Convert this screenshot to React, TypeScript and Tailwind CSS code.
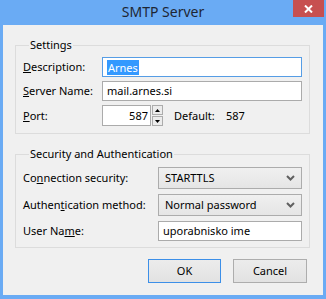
import { ReactNode } from "react"

const Chevron = () => (
  <svg width="9" height="6" viewBox="0 0 9 6" className="shrink-0">
    <polyline points="1,1 4.5,4.5 8,1" fill="none" stroke="#606060" strokeWidth="2" />
  </svg>
)

const Row = ({ label, children, labelW, h }: { label: ReactNode; children: ReactNode; labelW: string; h: string }) => (
  <div className={`flex items-center ${h}`}>
    <div className={`${labelW} shrink-0`}>{label}</div>
    {children}
  </div>
)

const Select = ({ value }: { value: string }) => (
  <div className="w-[144px] h-[22px] border border-[#acacac] bg-gradient-to-b from-[#f0f0f0] to-[#e5e5e5] flex items-center justify-between pl-[6px] pr-[6px]">
    <span>{value}</span>
    <Chevron />
  </div>
)

export default function App() {
  return (
    <div className="w-[326px] h-[299px] bg-[#6aabf4] flex flex-col px-[3px] pb-[4px] text-black font-['Noto_Sans',sans-serif] text-[11px] leading-[14px]">
      {/* title bar */}
      <div className="relative h-[25px] shrink-0 flex items-center justify-center">
        <span className="text-[14px] leading-[18px] text-[#1e2633] -mt-[2px]">SMTP Server</span>
        <div className="absolute top-0 right-[-1px] w-[31px] h-[17px] bg-[#c75050] flex items-center justify-center">
          <svg width="9" height="8" viewBox="0 0 9 8">
            <path d="M1 0.5 L8 7.5 M8 0.5 L1 7.5" stroke="white" strokeWidth="2" />
          </svg>
        </div>
      </div>

      {/* client area */}
      <div className="flex-1 bg-[#f0f0f0] flex flex-col pt-[12px]">
        <fieldset className="ml-[12px] w-[295px] border border-[#dcdcdc] pl-[7px] pr-[6px] pt-[4px] pb-[7px] flex flex-col gap-[4px]">
          <legend className="ml-[6px] px-[1px] text-[11px] leading-[16px]">Settings</legend>
          <Row labelW="w-[79px]" h="h-[20px]" label={<><u>D</u>escription:</>}>
            <div className="w-[200px] h-[20px] border border-[#569de5] bg-white flex items-center pl-[4px]">
              <span className="bg-[#3399ff] text-white px-[1px] leading-[15px]">Arnes</span>
            </div>
          </Row>
          <Row labelW="w-[79px]" h="h-[20px]" label={<><u>S</u>erver Name:</>}>
            <div className="w-[200px] h-[20px] border border-[#ababab] bg-white flex items-center pl-[4px]">
              mail.arnes.si
            </div>
          </Row>
          <Row labelW="w-[79px]" h="h-[21px]" label={<><u>P</u>ort:</>}>
            <div className="w-[49px] h-[21px] border border-[#ababab] bg-white flex items-center justify-end pr-[2px]">
              587
            </div>
            <div className="ml-[1px] w-[11px] h-[21px] flex flex-col gap-[1px]">
              <div className="h-[10px] border border-[#acacac] bg-[#ececec] flex items-center justify-center">
                <svg width="5" height="3" viewBox="0 0 5 3"><polygon points="0,3 2.5,0 5,3" fill="#000" /></svg>
              </div>
              <div className="h-[10px] border border-[#acacac] bg-[#ececec] flex items-center justify-center">
                <svg width="5" height="3" viewBox="0 0 5 3"><polygon points="0,0 2.5,3 5,0" fill="#000" /></svg>
              </div>
            </div>
            <span className="ml-[11px] w-[52px]">Default:</span>
            <span>587</span>
          </Row>
        </fieldset>

        <fieldset className="mt-[12px] ml-[12px] w-[295px] border border-[#dcdcdc] pl-[7px] pr-[6px] pt-[5px] pb-[6px] flex flex-col gap-[5px]">
          <legend className="ml-[6px] px-[1px] text-[11px] leading-[16px]">Security and Authentication</legend>
          <Row labelW="w-[135px]" h="h-[22px]" label={<>Co<u>n</u>nection security:</>}>
            <Select value="STARTTLS" />
          </Row>
          <Row labelW="w-[135px]" h="h-[22px]" label={<>Authen<u>t</u>ication method:</>}>
            <Select value="Normal password" />
          </Row>
          <Row labelW="w-[135px]" h="h-[20px]" label={<>User Na<u>m</u>e:</>}>
            <div className="w-[144px] h-[20px] border border-[#ababab] bg-white flex items-center pl-[4px]">
              uporabnisko ime
            </div>
          </Row>
        </fieldset>

        <div className="mt-[11px] flex justify-end gap-[12px] pr-[16px]">
          <button className="w-[73px] h-[24px] border border-[#3c8fe8] bg-gradient-to-b from-[#ececec] to-[#e2e2e2]">OK</button>
          <button className="w-[74px] h-[24px] border border-[#adadad] bg-gradient-to-b from-[#ececec] to-[#e2e2e2]">Cancel</button>
        </div>
      </div>
    </div>
  )
}
